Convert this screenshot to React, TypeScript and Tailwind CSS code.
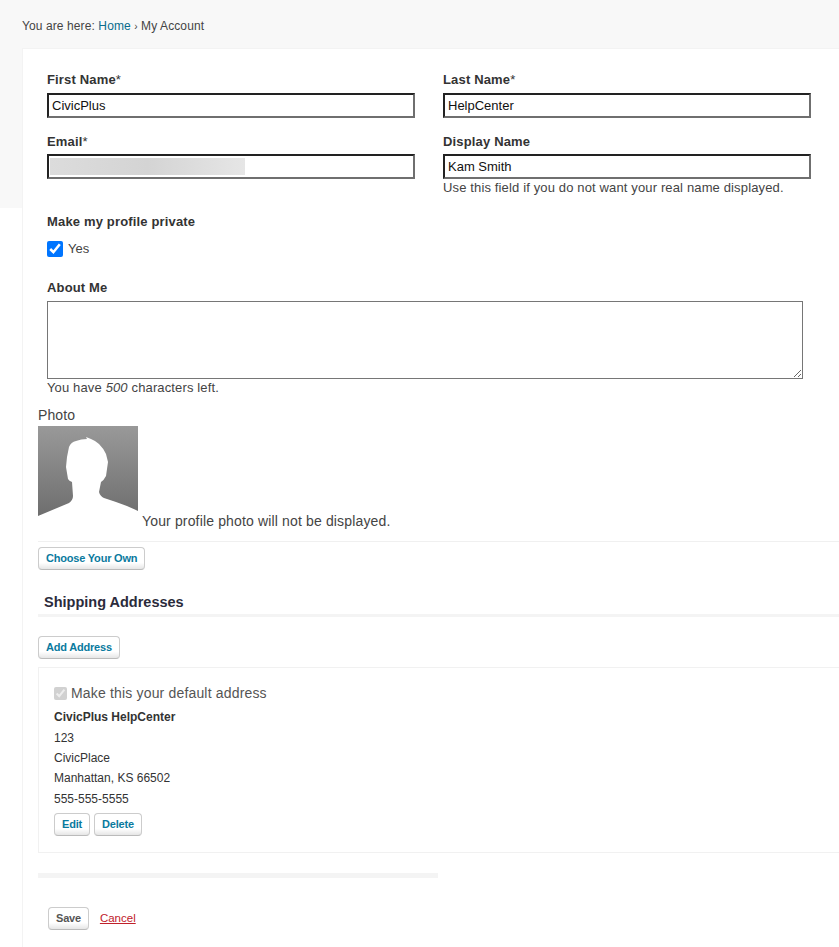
import { ReactNode } from 'react';

const FONT = "font-['Liberation_Sans',Arial,sans-serif]";

function Label({ children }: { children: ReactNode }) {
  return (
    <label className="block h-[18px] text-[13px] leading-[18px] font-bold text-[#333] tracking-[0.16px]">
      {children}
    </label>
  );
}

function Required() {
  return <span className="font-normal">*</span>;
}

function Field({
  label,
  value,
  hint,
  blurred,
  tight,
}: {
  label: ReactNode;
  value?: string;
  hint?: string;
  blurred?: boolean;
  tight?: boolean;
}) {
  return (
    <div className="h-[62px]">
      <Label>{label}</Label>
      <div className={`relative ${tight ? 'mt-[3px]' : 'mt-[4px]'}`}>
        <input
          readOnly
          value={value ?? ''}
          className="block w-[368px] h-[25px] px-[3px] text-[13px] text-[#111] bg-white border-2 border-t-[#222] border-l-[#222] border-r-[#6f6f6f] border-b-[#6f6f6f] outline-none"
        />
        {blurred && (
          <div className="absolute left-[3px] top-[4px] w-[195px] h-[17px] bg-linear-to-r from-[#dcdcdc] via-[#d4d4d4] to-[#e6e6e6]" />
        )}
      </div>
      {hint && (
        <p className="mt-[1px] text-[13px] leading-[16px] text-[#444] tracking-[0.14px] whitespace-nowrap">
          {hint}
        </p>
      )}
    </div>
  );
}

function SmallButton({
  children,
  dark,
}: {
  children: ReactNode;
  dark?: boolean;
}) {
  return (
    <button
      type="button"
      className={`h-[23px] px-[7px] text-[11px] leading-none font-bold tracking-[-0.2px] rounded-[4px] border border-[#ccc] border-b-[#bbb] bg-linear-to-b from-white from-70% to-[#e6e6e6] ${
        dark ? 'text-[#555]' : 'text-[#0a7a9e]'
      }`}
    >
      {children}
    </button>
  );
}

function Silhouette() {
  return (
    <svg width="100" height="100" viewBox="0 0 100 100" className="block shrink-0">
      <defs>
        <linearGradient id="photoBg" x1="0" y1="0" x2="0" y2="1">
          <stop offset="0" stopColor="#999999" />
          <stop offset="0.9" stopColor="#6e6e6e" />
        </linearGradient>
      </defs>
      <rect width="100" height="100" fill="url(#photoBg)" />
      <path
        fill="#fff"
        d="M0 90 L31 77 Q35 74 35 70 L34 56 Q31 55 30 53 L28 41 L29 31 L31 21 Q33 16 38 15 Q43 13 49 13 L48 11 L53 13 Q58 15 61 18 Q66 23 68 28 L70 36 L68 50 Q66 54 63 56 L61 66 Q62 70 66 72 L78 76 Q90 80 100 85 L100 100 L0 100 Z"
      />
    </svg>
  );
}

export default function App() {
  return (
    <div
      className={`${FONT} min-h-[947px] w-[839px] overflow-hidden bg-[linear-gradient(#f8f8f8_208px,#fff_208px)] text-[#444]`}
    >
      <div className="h-[48px] pl-[22px] pt-[18px] text-[12px] leading-[16px] tracking-[0.1px] text-[#444]">
        You are here: <span className="text-[#0a6c8c]">Home</span>{' '}
        <span className="text-[10px]">›</span> My Account
      </div>

      <div className="ml-[22px] h-[899px] bg-white border-l border-t border-[#f3f3f3] pt-[22px]">
        <div className="pl-[24px]">
          <div className="grid grid-cols-[368px_368px] gap-x-[28px]">
            <Field
              label={
                <>
                  First Name
                  <Required />
                </>
              }
              value="CivicPlus"
            />
            <Field
              label={
                <>
                  Last Name
                  <Required />
                </>
              }
              value="HelpCenter"
            />
            <Field
              tight
              blurred
              label={
                <>
                  Email
                  <Required />
                </>
              }
            />
            <Field
              tight
              label="Display Name"
              value="Kam Smith"
              hint="Use this field if you do not want your real name displayed."
            />
          </div>

          <div className="mt-[18px]">
            <Label>Make my profile private</Label>
            <label className="mt-[10px] flex items-center gap-[5px] h-[16px] text-[13px] text-[#444]">
              <input
                type="checkbox"
                readOnly
                checked
                className="m-0 w-[16px] h-[16px] accent-[#0075ff]"
              />
              Yes
            </label>
          </div>

          <div className="mt-[22px]">
            <Label>About Me</Label>
            <textarea
              readOnly
              className="block mt-[4px] w-[756px] h-[78px] bg-white border border-[#767676] outline-none"
            />
            <p className="mt-[1px] text-[13px] leading-[16px] text-[#444] tracking-[0.14px]">
              You have <em>500</em> characters left.
            </p>
          </div>
        </div>

        <div className="pl-[15px]">
          <div className="mt-[10px] text-[14px] leading-[18px] tracking-[0.1px] text-[#444]">Photo</div>
          <div className="mt-[2px] flex items-end gap-[4px] pb-[15px] border-b border-[#f0f0f0]">
            <Silhouette />
            <span className="-mb-[3px] text-[14px] leading-[16px] tracking-[0.15px] text-[#444]">
              Your profile photo will not be displayed.
            </span>
          </div>

          <div className="mt-[3px] h-[25px]">
            <SmallButton>Choose Your Own</SmallButton>
          </div>

          <h2 className="mt-[23px] pl-[6px] h-[21px] text-[14.5px] leading-[18px] font-bold text-[#2b2b3b] border-b-[3px] border-[#f4f4f4] box-content">
            Shipping Addresses
          </h2>

          <div className="mt-[17px] h-[23px]">
            <SmallButton>Add Address</SmallButton>
          </div>

          <div className="mt-[10px] w-[820px] h-[186px] border border-[#f1f1f1] pl-[15px] pt-[17px]">
            <label className="flex items-center gap-[4px] h-[16px] text-[14px] tracking-[0.17px] text-[#555]">
              <input
                type="checkbox"
                readOnly
                checked
                disabled
                className="m-0 w-[13px] h-[13px]"
              />
              Make this your default address
            </label>
            <div className="mt-[6.3px] text-[12px] leading-[20.35px] text-[#333]">
              <div className="font-bold">CivicPlus HelpCenter</div>
              <div>123</div>
              <div>CivicPlace</div>
              <div>Manhattan, KS 66502</div>
              <div>555-555-5555</div>
            </div>
            <div className="mt-[4.45px] flex gap-[4px]">
              <SmallButton>Edit</SmallButton>
              <SmallButton>Delete</SmallButton>
            </div>
          </div>

          <div className="mt-[20px] w-[400px] h-[5px] bg-[#f4f4f4]" />

          <div className="mt-[29px] ml-[10px] flex items-center gap-[11px]">
            <SmallButton dark>Save</SmallButton>
            <a href="#" className="text-[11.5px] text-[#c0202a] underline">
              Cancel
            </a>
          </div>
        </div>
      </div>
    </div>
  );
}
